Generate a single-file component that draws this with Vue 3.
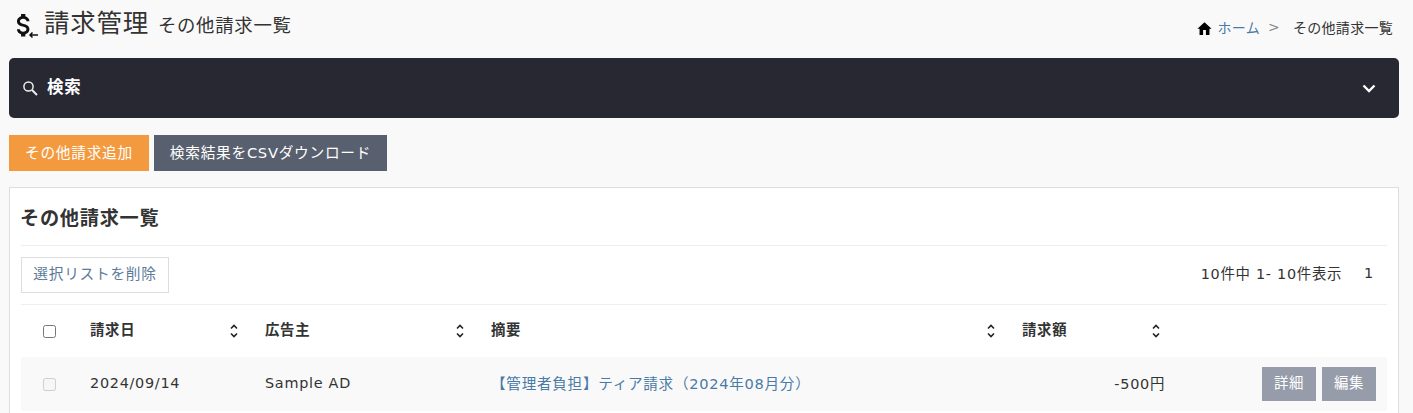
<script setup>
import { ref } from 'vue'

const checkedAll = ref(false)

const columns = [
  { key: 'date', label: '請求日', cls: 'col-date' },
  { key: 'client', label: '広告主', cls: 'col-client' },
  { key: 'summary', label: '摘要', cls: 'col-summary' },
  { key: 'amount', label: '請求額', cls: 'col-amount' },
]

const rows = [
  { id: 1, date: '2024/09/14', client: 'Sample AD', summary: '【管理者負担】ティア請求（2024年08月分）', amount: '-500円' },
]
</script>

<template>
  <div class="page">
    <header class="page-head">
      <div class="page-title">
        <svg class="title-icon" viewBox="0 0 28 28" width="28" height="28">
          <path fill="#111" transform="translate(.5 .5) scale(.82 .9)" d="M3 17.500h3.600c0 1.600 1.800 2.800 4 2.800s4-1.200 4-2.800c0-1.600-1.500-2.200-4.600-3-3.200-.8-7-1.800-7-5.900 0-2.700 2.100-4.800 5-5.600V.5h5.200v2.500c2.900.8 5 2.900 5 5.600h-3.600c0-1.600-1.800-2.800-4-2.800s-4 1.200-4 2.800c0 1.600 1.500 2.200 4.600 3 3.200.8 7 1.800 7 5.900 0 2.700-2.100 4.800-5 5.600v2.400H8v-2.400c-2.900-.8-5-2.900-5-5.600z"/>
          <path fill="none" stroke="#111" stroke-width="1.500" d="M16 22h8M18.500 19.500L16 22l2.500 2.500"/>
        </svg>
        <h1>請求管理</h1>
        <small>その他請求一覧</small>
      </div>
      <nav class="crumbs">
        <svg viewBox="0 0 24 24" width="17" height="17"><path fill="#000" d="M10 21v-7h4v7h5v-8.500h3L12 3 2 12.500h3V21z"/></svg>
        <a class="crumb-link">ホーム</a>
        <span class="crumb-sep">&gt;</span>
        <span>その他請求一覧</span>
      </nav>
    </header>

    <section class="search-bar">
      <svg viewBox="0 0 18 18" width="18" height="18"><circle cx="7.500" cy="7.500" r="4.600" fill="none" stroke="#eee" stroke-width="1.500"/><path fill="none" stroke="#eee" stroke-width="1.900" d="M11 11l5 5"/></svg>
      <span class="search-label">検索</span>
      <svg class="search-toggle" viewBox="0 0 24 24" width="24" height="24"><path fill="none" stroke="#fff" stroke-width="2.400" d="M6.500 9.500l5.500 5.500 5.500-5.500"/></svg>
    </section>

    <div class="actions">
      <button class="btn btn-orange">その他請求追加</button>
      <button class="btn btn-slate">検索結果をCSVダウンロード</button>
    </div>

    <section class="card">
      <h2 class="card-title">その他請求一覧</h2>
      <div class="toolbar">
        <button class="btn-outline">選択リストを削除</button>
        <div class="paging">
          <span>10件中 1- 10件表示</span>
          <span class="page-no">1</span>
        </div>
      </div>
      <table class="list">
        <thead>
          <tr>
            <th class="col-check"><input type="checkbox" v-model="checkedAll"></th>
            <th v-for="col in columns" :key="col.key" :class="col.cls">
              <div class="th-inner">
                <span class="th-label">{{ col.label }}</span>
                <svg viewBox="0 0 10 16" width="10" height="16"><path fill="none" stroke="#222" stroke-width="1.600" d="M2 5.500l3-3 3 3M2 10.500l3 3 3-3"/></svg>
              </div>
            </th>
            <th class="col-ops"></th>
          </tr>
        </thead>
        <tbody>
          <tr v-for="row in rows" :key="row.id">
            <td class="col-check"><input type="checkbox" disabled></td>
            <td class="cell">{{ row.date }}</td>
            <td class="cell">{{ row.client }}</td>
            <td class="cell"><a class="summary-link">{{ row.summary }}</a></td>
            <td class="cell amount">{{ row.amount }}</td>
            <td class="ops">
              <div class="ops-inner">
                <button class="btn-gray">詳細</button>
                <button class="btn-gray">編集</button>
              </div>
            </td>
          </tr>
        </tbody>
      </table>
    </section>
  </div>
</template>

<style>
html, body {
  margin: 0;
  height: 413px;
  overflow: hidden;
  background: #f9f9f9;
}
</style>

<style scoped>
.page {
  padding: 0 14px 0 9px;
  font-family: "DejaVu Sans", "Noto Sans CJK JP", sans-serif;
  font-size: 14.400px;
  letter-spacing: 0.05em;
  color: #333;
}
.page-head {
  display: flex;
  justify-content: space-between;
  height: 58px;
}
.page-title {
  display: flex;
  align-items: baseline;
  padding-top: 5px;
}
.title-icon {
  align-self: flex-start;
  margin: 8px 2px 0 5px;
}
.page-title h1 {
  margin: 0;
  font-size: 25.500px;
  font-weight: 400;
  line-height: 36px;
}
.page-title small {
  margin-left: 9px;
  font-size: 18.400px;
}
.crumbs {
  display: flex;
  align-items: center;
  height: 20px;
  margin: 18px 6px 0 0;
  font-size: 14px;
  letter-spacing: 0.02em;
}
.crumbs svg {
  margin-right: 5px;
}
.crumbs a,
.crumbs span {
  margin-bottom: 2px;
}
.crumb-link {
  color: #4a7ba8;
}
.crumbs .crumb-sep {
  margin: 0 13px 2px 8px;
  color: #888;
}
.search-bar {
  display: flex;
  align-items: center;
  height: 60px;
  padding: 0 18px 0 12px;
  background: #282833;
  border-radius: 5px;
  color: #fff;
}
.search-label {
  margin-left: 8px;
  margin-top: -5px;
  font-weight: 700;
  font-size: 16.500px;
}
.search-toggle {
  margin-left: auto;
}
.actions {
  display: flex;
  gap: 5px;
  margin: 17px 0 16px;
}
.btn {
  height: 36px;
  padding: 0 16px 4px;
  border: 0;
  color: #fff;
  font: inherit;
  font-size: 14.700px;
  letter-spacing: inherit;
}
.btn-orange {
  background: #f39a3f;
}
.btn-slate {
  background: #585f6e;
}
.card {
  padding: 0 11px 6px;
  background: #fff;
  border: 1px solid #ddd;
}
.card-title {
  margin: 0;
  height: 58px;
  line-height: 62px;
  text-indent: -1px;
  font-size: 19.200px;
  font-weight: 700;
  border-bottom: 1px solid #eee;
  box-sizing: border-box;
}
.toolbar {
  display: flex;
  justify-content: space-between;
  align-items: center;
  height: 59px;
  padding: 11px 0;
  box-sizing: border-box;
  border-bottom: 1px solid #eee;
}
.btn-outline {
  height: 36px;
  width: 148px;
  padding: 0 0 5px;
  background: #fff;
  border: 1px solid #ddd;
  color: #5d7a99;
  font: inherit;
  font-size: 14.700px;
  letter-spacing: inherit;
}
.paging {
  display: flex;
  align-items: center;
  gap: 22px;
  padding: 0 13px 5px 0;
}
.list {
  width: 100%;
  border-collapse: collapse;
  table-layout: fixed;
}
.list th {
  height: 52px;
  padding: 0 16px 0 10px;
  box-sizing: border-box;
  text-align: left;
  font-weight: 700;
}
.th-inner {
  display: flex;
  justify-content: space-between;
  align-items: center;
}
.th-label {
  margin-bottom: 6px;
}
.list td {
  height: 54px;
  padding: 0 10px;
  box-sizing: border-box;
  background: #f9f9f9;
}
.list td.cell {
  padding-bottom: 3px;
}
.list .col-check {
  width: 59px;
  padding: 0 0 0 22px;
}
.list input {
  display: block;
  width: 13px;
  height: 13px;
  margin: 0;
}
.col-date { width: 175px; }
.col-client { width: 226px; }
.col-summary { width: 531px; }
.col-amount { width: 165px; }
.summary-link {
  font-size: 14.600px;
  color: #4a7ba8;
}
.list td.amount {
  padding-right: 12px;
  text-align: right;
}
.list td.ops {
  padding-right: 11px;
}
.ops-inner {
  display: flex;
  justify-content: flex-end;
  gap: 6px;
}
.btn-gray {
  width: 54px;
  height: 34px;
  padding: 0 0 5px;
  border: 0;
  background: #969ca9;
  color: #fff;
  font: inherit;
  letter-spacing: inherit;
}
</style>
